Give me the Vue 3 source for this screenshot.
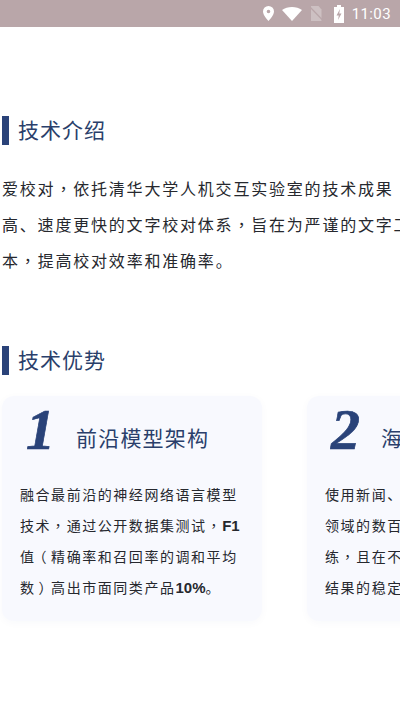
<script setup>
const split = (s) => s.split(/([，（）])/).filter(Boolean)
const intro = [
  '爱校对，依托清华大学人机交互实验室的技术成果',
  '高、速度更快的文字校对体系，旨在为严谨的文字工作',
  '本，提高校对效率和准确率。'
].map(split)
const cards = [
  { n: '1', title: '前沿模型架构', lines: [
    ['融合最前沿的神经网络语言模型'],
    ['技术，通过公开数据集测试，', 'F1'],
    ['值（精确率和召回率的调和平均'],
    ['数）高出市面同类产品', '10%', '。']
  ] },
  { n: '2', title: '海量数据训练', lines: [
    ['使用新闻、论文等多个'],
    ['领域的数百万数据训'],
    ['练，且在不同领域'],
    ['结果的稳定性']
  ] }
].map((c) => ({
  ...c,
  lines: c.lines.map((l) => l.flatMap(split))
}))
const isPunct = (p) => /^[，（）]$/.test(p)
const isParen = (p) => /^[（）]$/.test(p)
const isLatin = (p) => /[0-9]/.test(p)
</script>

<template>
  <div class="page">
    <div class="status">
      <svg class="ic pin" width="13" height="15" viewBox="0 0 13 15"><path fill="#fff" fill-rule="evenodd" d="M6.500 0A5.500 5.500 0 0 0 1 5.500C1 9.500 6.500 15 6.500 15S12 9.500 12 5.500A5.500 5.500 0 0 0 6.500 0zm0 3.700a1.800 1.800 0 1 1 0 3.600 1.800 1.800 0 0 1 0-3.600z"/></svg>
      <svg class="ic wifi" width="20" height="14" viewBox="0 0 20 14"><path fill="#fff" d="M0 3C2.800 1 6.200 0 10 0s7.200 1 10 3L10 14z"/></svg>
      <svg class="ic sim" width="14" height="15" viewBox="0 0 14 15"><path fill="#cdc0c2" d="M2 0h7.500L12.500 3.500V15H2z"/><path stroke="#b9a6a9" stroke-width="1.200" d="M0.500 0.500l13 13.500"/></svg>
      <svg class="ic batt" width="10" height="18" viewBox="0 0 10 18"><path fill="#fff" d="M3 0h4v2h3v16H0V2h3z"/><path fill="#b9a6a9" d="M6 4L2.500 10.500h2.300L4 15l3.500-6.500H5.200z"/></svg>
      <span class="time">11:03</span>
    </div>

    <section class="sec first">
      <h2 class="head">技术介绍</h2>
      <div class="intro">
        <div v-for="(l, i) in intro" :key="i" class="intro-line">
          <template v-for="(p, j) in l" :key="j">
            <span v-if="isPunct(p)" class="punct">{{ p }}</span>
            <template v-else>{{ p }}</template>
          </template>
        </div>
      </div>
    </section>

    <section class="sec second">
      <h2 class="head">技术优势</h2>
      <div class="cards">
        <article v-for="c in cards" :key="c.n" class="card">
          <div class="card-top">
            <span class="num">{{ c.n }}</span>
            <span class="title">{{ c.title }}</span>
          </div>
          <div class="card-body">
            <div v-for="(l, i) in c.lines" :key="i" class="card-line">
              <template v-for="(p, j) in l" :key="j">
                <b v-if="isLatin(p)" class="strong">{{ p }}</b>
                <span v-else-if="isParen(p)" class="paren">{{ p }}</span>
                <span v-else-if="isPunct(p)" class="punct">{{ p }}</span>
                <template v-else>{{ p }}</template>
              </template>
            </div>
          </div>
        </article>
      </div>
    </section>
  </div>
</template>

<style>
html, body { margin: 0; background: #fff; }
</style>

<style scoped>
.page {
  width: 400px;
  height: 710px;
  overflow: hidden;
  background: #fff;
  font-family: "Noto Sans CJK SC", "Noto Sans", sans-serif;
}
.status {
  height: 27px;
  background: #b9a6a9;
  display: flex;
  align-items: center;
  justify-content: flex-end;
  padding-right: 9px;
  color: #fff;
}
.ic { display: block; }
.pin { margin-right: 7px; }
.wifi { margin-right: 7px; }
.sim { margin-right: 11px; }
.batt { margin-right: 8px; }
.time { font: 15px Roboto, sans-serif; letter-spacing: 0.4px; }
.punct { font-family: "Noto Sans CJK TC", sans-serif; }
.paren {
  display: inline-block;
  width: 1em;
  text-align: center;
  font-feature-settings: "palt";
  letter-spacing: 0;
  margin-right: 1.55px;
}
.sec { padding-left: 2px; }
.first { padding-top: 89px; }
.second { padding-top: 68px; }
.head {
  margin: 0;
  height: 29px;
  line-height: 27px;
  border-left: 7px solid #2a4379;
  padding-left: 9px;
  font-size: 21px;
  font-weight: 400;
  color: #2a3f6b;
  letter-spacing: 1px;
}
.intro { margin-top: 25px; width: 440px; }
.intro-line {
  height: 36px;
  line-height: 36px;
  white-space: nowrap;
  font-size: 16px;
  letter-spacing: 1.8px;
  color: #26282e;
}
.cards {
  display: flex;
  gap: 45px;
  margin-top: 21px;
  width: 600px;
}
.card {
  flex: 0 0 260px;
  height: 225px;
  box-sizing: border-box;
  border-radius: 12px;
  background: #f8f9fe;
  box-shadow: 0 2px 8px rgba(40, 60, 120, 0.03);
  padding: 0 18px;
}
.card-top {
  height: 76px;
  display: flex;
  align-items: center;
}
.num {
  width: 50px;
  margin-left: 6px;
  margin-bottom: 8px;
  font: italic 700 58px/58px "Liberation Serif", serif;
  -webkit-text-stroke: 0.7px #2a4379;
  color: #2a4379;
}
.title {
  font-size: 21px;
  letter-spacing: 1.2px;
  color: #2a3f6b;
  white-space: nowrap;
  padding-top: 6px;
}
.card-body { margin-top: 7px; }
.card-line {
  height: 31px;
  line-height: 31px;
  font-size: 14px;
  letter-spacing: 1.55px;
  color: #26282e;
  white-space: nowrap;
}
.strong { font-family: "Liberation Sans", sans-serif; font-weight: 700; letter-spacing: 0; font-size: 15px; }
</style>
